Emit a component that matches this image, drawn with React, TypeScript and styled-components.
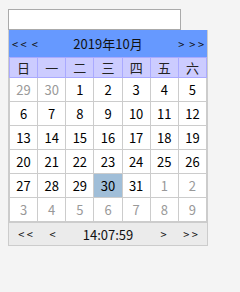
import styled, { createGlobalStyle } from "styled-components";

const GlobalStyle = createGlobalStyle`
  html, body {
    margin: 0;
    padding: 0;
    background: #f4f4f4;
    font-family: "Noto Sans CJK SC", "DejaVu Sans", sans-serif;
  }
`;

const WEEK = ["日", "一", "二", "三", "四", "五", "六"];

type Day = { n: number; other?: boolean; selected?: boolean };

const buildDays = (): Day[] => {
  const days: Day[] = [{ n: 29, other: true }, { n: 30, other: true }];
  for (let i = 1; i <= 31; i++) days.push({ n: i, selected: i === 30 });
  for (let i = 1; i <= 9; i++) days.push({ n: i, other: true });
  return days;
};

const App = () => {
  const days = buildDays();

  return (
    <>
      <GlobalStyle />
      <Page>
        <DateInput type="text" />
        <Calendar>
          <Header>
            <Arrows>
              <Arrow>&lt; &lt;</Arrow>
              <Arrow>&lt;</Arrow>
            </Arrows>
            <Title>2019年10月</Title>
            <Arrows>
              <Arrow>&gt;</Arrow>
              <Arrow>&gt; &gt;</Arrow>
            </Arrows>
          </Header>
          <WeekRow>
            {WEEK.map((w) => (
              <WeekCell key={w}>{w}</WeekCell>
            ))}
          </WeekRow>
          <DayGrid>
            {days.map((d, i) => (
              <DayCell key={i} $other={d.other} $selected={d.selected}>
                {d.n}
              </DayCell>
            ))}
          </DayGrid>
          <Footer>
            <Arrow>&lt; &lt;</Arrow>
            <Arrow>&lt;</Arrow>
            <Time>14:07:59</Time>
            <Arrow>&gt;</Arrow>
            <Arrow>&gt; &gt;</Arrow>
          </Footer>
        </Calendar>
      </Page>
    </>
  );
};

export default App;

const Page = styled.div`
  padding: 9px 8px;
  display: flex;
  flex-direction: column;
  align-items: flex-start;
`;

const DateInput = styled.input`
  box-sizing: border-box;
  width: 173px;
  height: 21px;
  margin: 0;
  border: 1px solid #aaaaaa;
  background: #fff;
  outline: none;
`;

const Calendar = styled.div`
  box-sizing: border-box;
  width: 200px;
  border: 1px solid #cccccc;
  border-top: none;
  background: #fff;
`;

const Header = styled.div`
  height: 27px;
  background: #6699ff;
  display: flex;
  align-items: center;
  padding: 0 3px;
  color: #111;
`;

const Arrows = styled.div`
  display: flex;
  gap: 5px;
`;

const Arrow = styled.span`
  font-size: 11px;
  white-space: pre;
  color: #111;
  text-align: center;
  cursor: pointer;
`;

const Title = styled.div`
  flex: 1;
  text-align: center;
  font-size: 13px;
`;

const WeekRow = styled.div`
  display: grid;
  grid-template-columns: repeat(7, 1fr);
  gap: 1px;
  padding: 1px;
  background: #aaaaff;
`;

const WeekCell = styled.div`
  height: 19px;
  background: #ccccff;
  display: flex;
  align-items: center;
  justify-content: center;
  font-size: 13px;
  color: #222;
`;

const DayGrid = styled.div`
  display: grid;
  grid-template-columns: repeat(7, 1fr);
  gap: 1px;
  padding: 0 1px 1px;
  background: #cccccc;
`;

const DayCell = styled.div<{ $other?: boolean; $selected?: boolean }>`
  height: 23px;
  display: flex;
  align-items: center;
  justify-content: center;
  font-size: 13px;
  background: ${(p) => (p.$selected ? "#a0bed8" : "#fff")};
  color: ${(p) => (p.$other ? "#999" : "#000")};
`;

const Footer = styled.div`
  height: 22px;
  display: grid;
  grid-template-columns: 25px 29px 1fr 29px 25px;
  align-items: center;
  padding: 0 4px;
  background: #ebebeb;
  border-top: 1px solid #cccccc;
`;

const Time = styled.span`
  text-align: center;
  font-size: 13px;
  color: #111;
`;
